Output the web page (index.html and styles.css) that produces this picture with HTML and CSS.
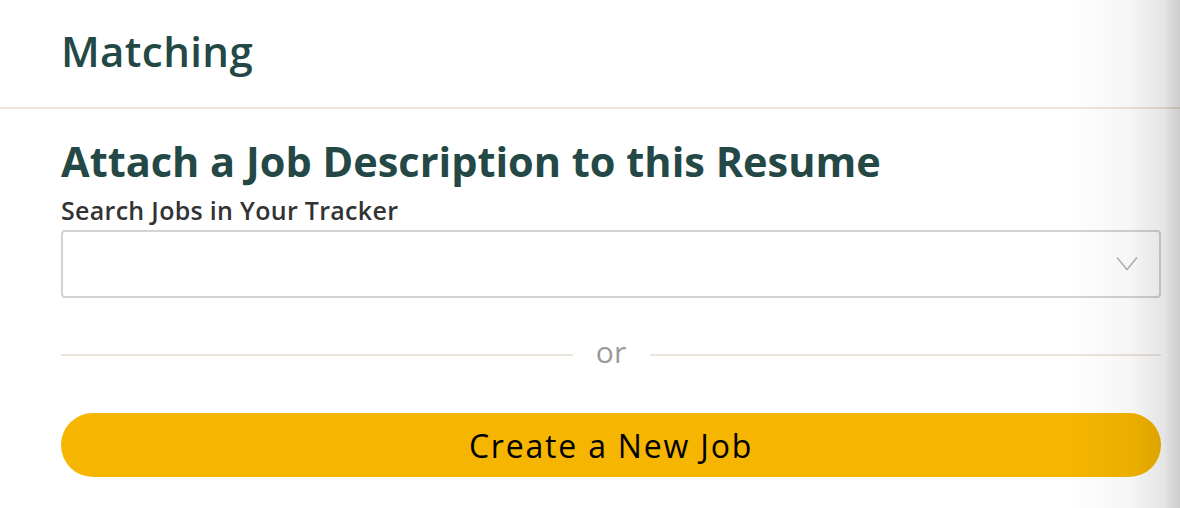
FILE: index.html
```html
<!DOCTYPE html>
<html>
<head>
<meta charset="utf-8">
<link rel="stylesheet" href="styles.css">
</head>
<body>
<div class="page">
  <header class="header">
    <h1 class="header-title">Matching</h1>
  </header>
  <main class="content">
    <h2 class="title">Attach a Job Description to this Resume</h2>
    <label class="label">Search Jobs in Your Tracker</label>
    <div class="select">
      <svg class="chevron" width="22" height="16" viewBox="0 0 22 16"><path d="M1 1.5 L11 13.5 L21 1.5" fill="none" stroke="#b5b5b5" stroke-width="1.6"/></svg>
    </div>
    <div class="divider">
      <span class="line"></span>
      <span class="or">or</span>
      <span class="line"></span>
    </div>
    <button class="create">Create a New Job</button>
  </main>
  <div class="edge-shadow"></div>
</div>
</body>
</html>
```
FILE: styles.css
```css
html, body {
  margin: 0;
  padding: 0;
  background: #fff;
}
.page {
  position: relative;
  width: 1180px;
  height: 508px;
  overflow: hidden;
  font-family: "Open Sans", "Noto Sans", sans-serif;
}
.header {
  box-sizing: border-box;
  height: 109px;
  border-bottom: 2px solid #ece5dc;
  padding: 27px 61px 0;
}
.header-title {
  margin: 0;
  font-size: 42px;
  font-weight: 600;
  letter-spacing: 0.4px;
  color: #234846;
  line-height: 48px;
}
.content {
  padding: 0 19px 0 61px;
  display: flex;
  flex-direction: column;
}
.title {
  margin: 27px 0 0;
  font-size: 41.5px;
  font-weight: 700;
  color: #234846;
  line-height: 50px;
}
.label {
  margin-top: 9px;
  font-size: 25px;
  font-weight: 600;
  letter-spacing: 0.3px;
  color: #333;
  line-height: 30px;
}
.select {
  margin-top: 5px;
  height: 68px;
  box-sizing: border-box;
  border: 2px solid #d3d3d3;
  border-radius: 4px;
  display: flex;
  align-items: center;
  justify-content: flex-end;
  padding-right: 21px;
}
.divider {
  margin-top: 40px;
  display: flex;
  align-items: center;
  height: 34px;
}
.line {
  flex: 1;
  height: 2px;
  background: #ece5dc;
}
.or {
  width: 77px;
  text-align: center;
  font-size: 30px;
  color: #9a9a9a;
  line-height: 34px;
  padding-bottom: 6px;
}
.create {
  margin-top: 41px;
  height: 64px;
  border: none;
  border-radius: 32px;
  background: #f5b500;
  color: #000;
  font-family: inherit;
  font-size: 32px;
  letter-spacing: 1.8px;
  font-weight: 400;
  padding: 0;
}
.edge-shadow {
  position: absolute;
  top: 0;
  right: 0;
  width: 110px;
  height: 100%;
  background: linear-gradient(to right, rgba(0,0,0,0) 0%, rgba(0,0,0,0.04) 55%, rgba(0,0,0,0.1) 85%, rgba(0,0,0,0.2) 100%);
  pointer-events: none;
}
```
